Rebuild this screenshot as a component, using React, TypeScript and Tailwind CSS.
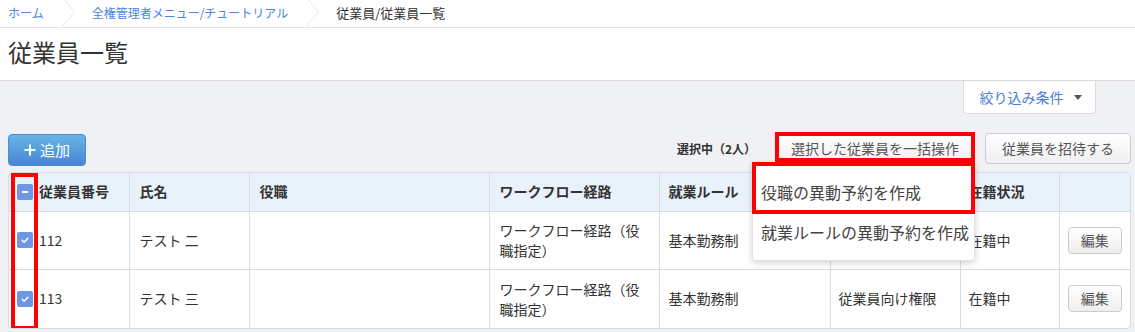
import React from 'react';

const rows = [
  { no: '112', name: 'テスト 二', role: '', flow: 'ワークフロー経路（役職指定）', rule: '基本勤務制', perm: '従業員向け権限', status: '在籍中' },
  { no: '113', name: 'テスト 三', role: '', flow: 'ワークフロー経路（役職指定）', rule: '基本勤務制', perm: '従業員向け権限', status: '在籍中' },
];

const Check = ({ mixed }: { mixed?: boolean }) => (
  <span className="inline-flex h-4 w-4 shrink-0 items-center justify-center rounded-[2px] bg-[#6f96e2]">
    {mixed ? (
      <span className="block h-[2px] w-[6px] bg-white" />
    ) : (
      <svg width="10" height="10" viewBox="0 0 10 10">
        <path d="M2.2 5.3l1.9 1.9 3.8-3.9" fill="none" stroke="white" strokeWidth="1.5" strokeLinecap="round" strokeLinejoin="round" />
      </svg>
    )}
  </span>
);

const Chevron = () => (
  <svg className="ml-[18px] mr-[17px] shrink-0" width="13" height="27" viewBox="0 0 13 27">
    <path d="M2 0 L12.5 13.5 L0 27" fill="none" stroke="#e8e8e8" strokeWidth="1" />
  </svg>
);

const App = () => {
  return (
    <div className="min-h-screen bg-[#f0f1f5] font-['Noto_Sans_CJK_JP','Liberation_Sans',sans-serif] text-[#333]">
      {/* header */}
      <div className="bg-white">
        <div className="flex h-[28px] items-center border-b border-[#e6e6e6] pl-2 pb-[2px]">
          <span className="text-[12px] text-[#4a86e0]">ホーム</span>
          <Chevron />
          <span className="text-[12px] text-[#4a86e0]">全権管理者メニュー/チュートリアル</span>
          <Chevron />
          <span className="text-[13px] text-[#333]">従業員/従業員一覧</span>
        </div>
        <div className="flex h-[53px] items-center border-b border-[#d9d9d9] pl-2 pb-[5px]">
          <h1 className="text-[24px] leading-none font-normal">従業員一覧</h1>
        </div>
      </div>

      {/* filter */}
      <div className="flex justify-end pr-[39px]">
        <button className="flex h-[33px] w-[133px] items-center justify-center gap-[10px] rounded-b-[4px] border border-t-0 border-[#dcdcdc] bg-white pl-[2px] text-[14px] text-[#4b7fd6]">
          絞り込み条件
          <svg width="8" height="5" viewBox="0 0 8 5">
            <path d="M0 0 H8 L4 5 Z" fill="#555" />
          </svg>
        </button>
      </div>

      {/* actions */}
      <div className="mt-[19px] flex items-start justify-between pl-2 pr-1">
        <button className="mt-[1px] flex h-[32px] w-[78px] items-center justify-center gap-[4px] rounded-[4px] border border-[#4f8ad6] bg-gradient-to-b from-[#66b6e5] to-[#4a84d7] text-[15px] text-white">
          <svg width="12" height="12" viewBox="0 0 12 12">
            <path d="M6 0.5 V11.5 M0.5 6 H11.5" stroke="white" strokeWidth="2" />
          </svg>
          追加
        </button>
        <div className="flex items-center">
          <span className="mr-[22px] text-[12px] font-bold">選択中（2人）</span>
          <div className="relative">
            <button className="flex h-[31px] items-center rounded-[4px] border border-[#ccc] bg-gradient-to-b from-white to-[#efefef] px-3 text-[14px] text-[#555]">
              選択した従業員を一括操作
            </button>
            <div className="pointer-events-none absolute -left-[3px] -right-[3px] -top-[1px] bottom-[2px] border-4 border-[#ff0000]" />
            <div className="absolute left-[-26px] top-[29px] z-10 w-[223px] rounded-b-[4px] border border-[#e2e2e2] bg-white pt-[9px] pb-[8px] shadow-[0_2px_6px_rgba(0,0,0,0.18)]">
              <div className="flex h-[40px] items-center whitespace-nowrap pl-[8px] text-[16px] text-[#444]">役職の異動予約を作成</div>
              <div className="flex h-[40px] items-center whitespace-nowrap pl-[8px] text-[16px] text-[#444]">就業ルールの異動予約を作成</div>
              <div className="pointer-events-none absolute -left-px -right-px -top-px h-[52px] border-4 border-[#ff0000]" />
            </div>
          </div>
          <button className="ml-[13px] flex h-[31px] items-center rounded-[4px] border border-[#ccc] bg-gradient-to-b from-white to-[#efefef] px-4 text-[14px] text-[#555]">
            従業員を招待する
          </button>
        </div>
      </div>

      {/* table */}
      <div className="relative mx-2 mr-1 mt-[6px] overflow-hidden rounded-[4px] border border-[#d8dce2] bg-white">
        <table className="w-full table-fixed border-collapse text-[14px]">
          <colgroup>
            <col className="w-[120px]" />
            <col className="w-[120px]" />
            <col className="w-[240px]" />
            <col className="w-[170px]" />
            <col className="w-[171px]" />
            <col className="w-[130px]" />
            <col className="w-[99px]" />
            <col />
          </colgroup>
          <thead>
            <tr className="h-[38px] bg-[#e9f1fb] text-left font-bold">
              <th className="pl-[8px]">
                <div className="flex items-center gap-[6px]">
                  <Check mixed />
                  <span>従業員番号</span>
                </div>
              </th>
              <th className="border-l border-[#d8dce2] pl-[10px]">氏名</th>
              <th className="border-l border-[#d8dce2] pl-[10px]">役職</th>
              <th className="border-l border-[#d8dce2] pl-[10px]">ワークフロー経路</th>
              <th className="border-l border-[#d8dce2] pl-[9px]">就業ルール</th>
              <th className="border-l border-[#d8dce2] pl-[8px]">権限</th>
              <th className="border-l border-[#d8dce2] pl-[8px]">在籍状況</th>
              <th className="border-l border-[#d8dce2]"></th>
            </tr>
          </thead>
          <tbody>
            {rows.map((r, i) => (
              <tr key={r.no} className={(i === 0 ? 'h-[58px]' : 'h-[59px]') + ' border-t border-[#d8dce2] align-middle'}>
                <td className="pl-[8px]">
                  <div className="flex items-center gap-[6px]">
                    <Check />
                    <span>{r.no}</span>
                  </div>
                </td>
                <td className="border-l border-[#d8dce2] pl-[10px]">{r.name}</td>
                <td className="border-l border-[#d8dce2] pl-[10px]">{r.role}</td>
                <td className="border-l border-[#d8dce2] px-[10px] leading-[20px]">{r.flow}</td>
                <td className="border-l border-[#d8dce2] pl-[9px]">{r.rule}</td>
                <td className="border-l border-[#d8dce2] pl-[8px]">{r.perm}</td>
                <td className="border-l border-[#d8dce2] pl-[8px]">{r.status}</td>
                <td className="border-l border-[#d8dce2] text-center">
                  <button className="h-[27px] w-[54px] rounded-[4px] border border-[#ccc] bg-gradient-to-b from-white to-[#eeeeee] text-[14px] text-[#555]">
                    編集
                  </button>
                </td>
              </tr>
            ))}
          </tbody>
        </table>
        <div className="pointer-events-none absolute left-[2px] top-0 h-[157px] w-[27px] border-4 border-[#ff0000]" />
      </div>
    </div>
  );
};

export default App;
